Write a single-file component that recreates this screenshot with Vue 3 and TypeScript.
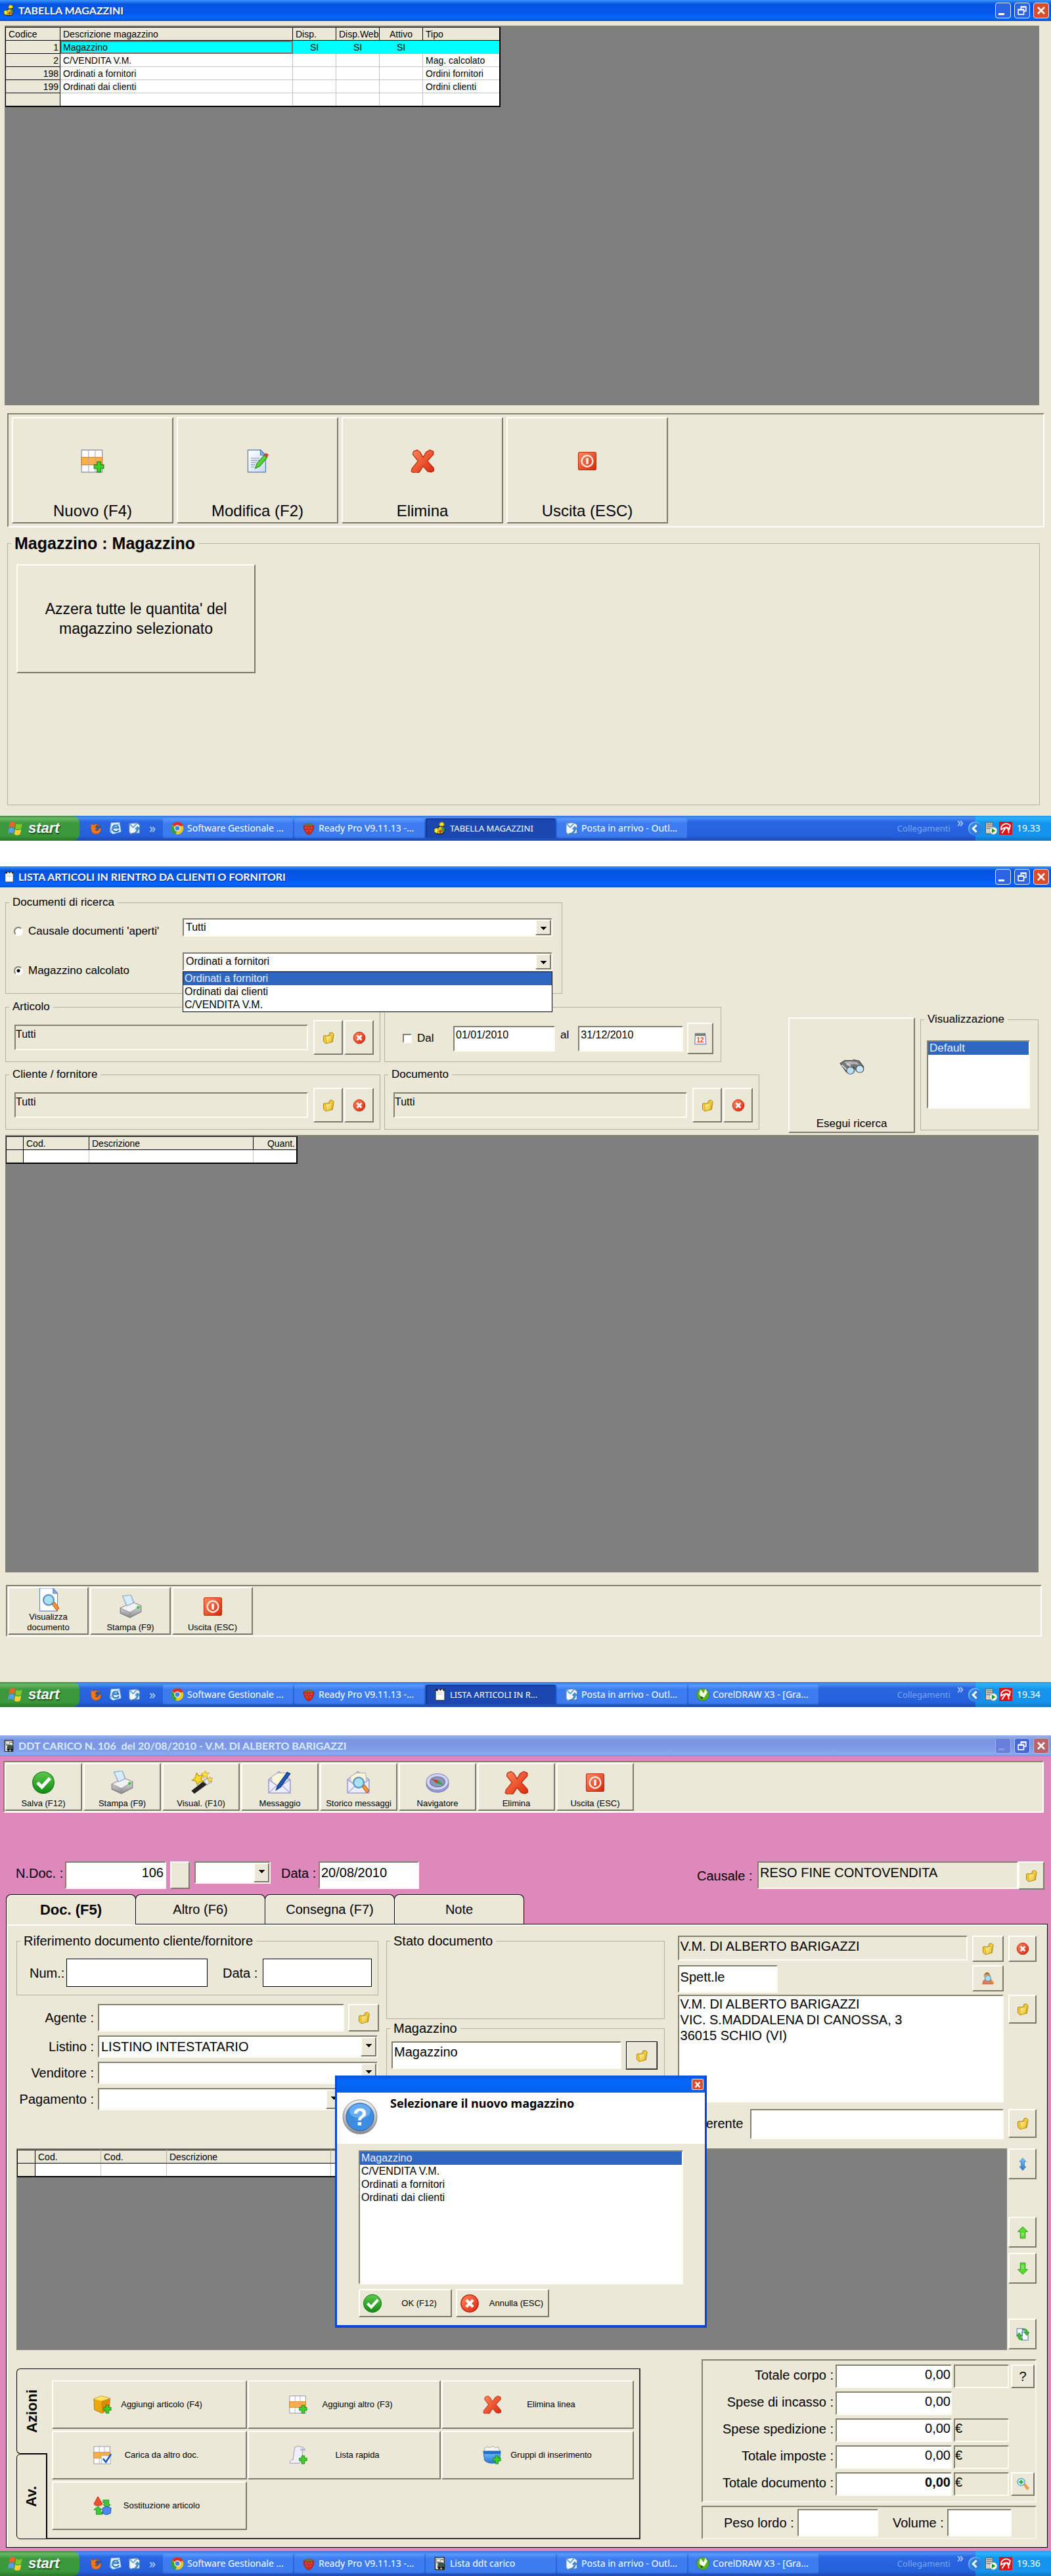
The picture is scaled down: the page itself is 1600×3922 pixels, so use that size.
<script setup lang="ts">
import { ref } from 'vue'

type ScreenKind = 'warehouses' | 'returns' | 'document'

interface Task {
  icon: string
  label: string
}

interface Screen {
  kind: ScreenKind
  icon: string
  title: string
  activeTask: number
  tasks: Task[]
  time: string
}

interface Action {
  icon: string
  label: string
}

interface Total {
  id: string
  label: string
  currency: string | null
  button: string | null
}

const chrome: Task = { icon: 'chrome', label: 'Software Gestionale ...' }
const ready: Task = { icon: 'berry', label: 'Ready Pro V9.11.13 -...' }
const mail: Task = { icon: 'outlook', label: 'Posta in arrivo - Outl...' }
const corel: Task = { icon: 'corel', label: 'CorelDRAW X3 - [Gra...' }

const screens: Screen[] = [
  {
    kind: 'warehouses',
    icon: 'worker',
    title: 'TABELLA MAGAZZINI',
    activeTask: 2,
    tasks: [chrome, ready, { icon: 'worker', label: 'TABELLA MAGAZZINI' }, mail],
    time: '19.33',
  },
  {
    kind: 'returns',
    icon: 'sheet',
    title: 'LISTA ARTICOLI IN RIENTRO DA CLIENTI O FORNITORI',
    activeTask: 2,
    tasks: [chrome, ready, { icon: 'sheet', label: 'LISTA ARTICOLI IN R...' }, mail, corel],
    time: '19.34',
  },
  {
    kind: 'document',
    icon: 'ddt',
    title: 'DDT CARICO N. 106  del 20/08/2010 - V.M. DI ALBERTO BARIGAZZI',
    activeTask: -1,
    tasks: [chrome, ready, { icon: 'ddt', label: 'Lista ddt carico' }, mail, corel],
    time: '19.36',
  },
]

const warehouses = [
  { code: '1', name: 'Magazzino', flag: 'SI', kind: '' },
  { code: '2', name: 'C/VENDITA V.M.', flag: '', kind: 'Mag. calcolato' },
  { code: '198', name: 'Ordinati a fornitori', flag: '', kind: 'Ordini fornitori' },
  { code: '199', name: 'Ordinati dai clienti', flag: '', kind: 'Ordini clienti' },
  { code: '', name: '', flag: '', kind: '' },
]

const warehouseActions: Action[] = [
  { icon: 'row-add', label: 'Nuovo (F4)' },
  { icon: 'edit', label: 'Modifica (F2)' },
  { icon: 'cross', label: 'Elimina' },
  { icon: 'power', label: 'Uscita (ESC)' },
]

const returnActions: Action[] = [
  { icon: 'preview', label: 'Visualizza documento' },
  { icon: 'printer', label: 'Stampa (F9)' },
  { icon: 'power', label: 'Uscita (ESC)' },
]

const documentActions: Action[] = [
  { icon: 'check', label: 'Salva (F12)' },
  { icon: 'printer', label: 'Stampa (F9)' },
  { icon: 'wand', label: 'Visual. (F10)' },
  { icon: 'mail-pen', label: 'Messaggio' },
  { icon: 'mail-lens', label: 'Storico messaggi' },
  { icon: 'compass', label: 'Navigatore' },
  { icon: 'cross', label: 'Elimina' },
  { icon: 'power', label: 'Uscita (ESC)' },
]

const lineActions: Action[] = [
  { icon: 'cube-add', label: 'Aggiungi articolo (F4)' },
  { icon: 'row-add', label: 'Aggiungi altro (F3)' },
  { icon: 'cross', label: 'Elimina linea' },
  { icon: 'row-check', label: 'Carica da altro doc.' },
  { icon: 'scroll-add', label: 'Lista rapida' },
  { icon: 'group-add', label: 'Gruppi di inserimento' },
  { icon: 'swap', label: 'Sostituzione articolo' },
]

const totals: Total[] = [
  { id: 'body', label: 'Totale corpo :', currency: '', button: 'question' },
  { id: 'cash', label: 'Spese di incasso :', currency: null, button: null },
  { id: 'ship', label: 'Spese spedizione :', currency: '€', button: null },
  { id: 'tax', label: 'Totale imposte :', currency: '€', button: null },
  { id: 'doc', label: 'Totale documento :', currency: '€', button: 'zoom' },
]

const tabs = ['Doc. (F5)', 'Altro (F6)', 'Consegna (F7)', 'Note']
const calculated = ['Ordinati a fornitori', 'Ordinati dai clienti', 'C/VENDITA V.M.']
const choices = ['Magazzino', 'C/VENDITA V.M.', 'Ordinati a fornitori', 'Ordinati dai clienti']
const sorters = ['arrow-both', 'arrow-up', 'arrow-down', 'refresh']

const mode = ref('calculated')
const address = ref('V.M. DI ALBERTO BARIGAZZI\nVIC. S.MADDALENA DI CANOSSA, 3\n36015 SCHIO (VI)')
</script>

<template>
  <svg class="sprite" aria-hidden="true">
    <defs>
      <linearGradient id="g-red" x1="0" y1="0" x2="1" y2="1"><stop offset="0" stop-color="#ff8a5c" /><stop offset="1" stop-color="#d8240c" /></linearGradient>
      <linearGradient id="g-gold" x1="0" y1="0" x2="1" y2="1"><stop offset="0" stop-color="#fff6a0" /><stop offset="1" stop-color="#e8b820" /></linearGradient>
      <linearGradient id="g-green" x1="0" y1="0" x2="0" y2="1"><stop offset="0" stop-color="#5cc84c" /><stop offset="1" stop-color="#118a14" /></linearGradient>
      <linearGradient id="g-blue" x1="0" y1="0" x2="0" y2="1"><stop offset="0" stop-color="#7cc4ff" /><stop offset="1" stop-color="#2477d4" /></linearGradient>
      <linearGradient id="g-page" x1="0" y1="0" x2="1" y2="1"><stop offset="0" stop-color="#ffffff" /><stop offset="1" stop-color="#c8d8f0" /></linearGradient>
      <linearGradient id="g-steel" x1="0" y1="0" x2="0" y2="1"><stop offset="0" stop-color="#f4f4f4" /><stop offset="1" stop-color="#8c8c90" /></linearGradient>
    </defs>
    <symbol id="plus" viewBox="0 0 32 32"><path d="M22 17h5v4h4v5h-4v5h-5v-5h-4v-5h4z" fill="#3fd02c" stroke="#128412" /></symbol>
    <symbol id="table" viewBox="0 0 32 32">
      <path d="M1 1h28v30H1z" fill="#fff" stroke="#8888a4" /><path d="M1 11h28v10H1z" fill="#ffb040" stroke="#c88430" /><path d="M10.500 1v30M19.500 1v30" stroke="#a8a8bc" fill="none" />
    </symbol>
    <symbol id="row-add" viewBox="0 0 32 32"><use href="#table" /><use href="#plus" /></symbol>
    <symbol id="row-check" viewBox="0 0 32 32"><use href="#table" /><path d="M14 17h16v14H14z" fill="#fff" stroke="#98a4c0" /><path d="M17 22l5 6 9-14" fill="none" stroke="#185cc4" stroke-width="3" /></symbol>
    <symbol id="edit" viewBox="0 0 32 32">
      <path d="M3 1h17l7 7v23H3z" fill="url(#g-page)" stroke="#5478b0" /><path d="M20 1v7h7z" fill="#8cb4e8" stroke="#5478b0" /><path d="M7 12h12M7 15h13M7 18h8M7 21h6M7 24h5" stroke="#8c9cc0" />
      <path d="M13 26l2-6 10-12 4 3-10 12z" fill="#58d82c" stroke="#1c8c10" /><path d="M25 8l2-3 4 2-2 4z" fill="#e83820" />
    </symbol>
    <symbol id="cross" viewBox="0 0 32 32"><path d="M4 3l5-2 4 3 4 7 4-7 5-3 5 2 0 4-8 9 8 9 1 4-4 2-5-1-6-7-5 8-6 2-5-3 1-4 8-10-7-9z" fill="url(#g-red)" stroke="#b82008" /></symbol>
    <symbol id="power" viewBox="0 0 32 32"><rect x="4" y="4" width="24" height="24" rx="2" fill="url(#g-red)" stroke="#b83014" /><circle cx="16" cy="16" r="7.500" fill="none" stroke="#ffe8e0" stroke-width="2.200" /><path d="M16 12v8" stroke="#fff" stroke-width="3" /></symbol>
    <symbol id="folder" viewBox="0 0 32 32"><path d="M4 12l5-2 2 2 7-3 1-5 6-1 4 4-3 19-17 4-5-5z" fill="#f4cc30" stroke="#a47c10" stroke-width="1.500" /><path d="M9 13l13-3 3 4-1 12-13 4z" fill="url(#g-gold)" stroke="#b88c18" /></symbol>
    <symbol id="stop" viewBox="0 0 32 32"><circle cx="16" cy="16" r="14" fill="url(#g-red)" stroke="#c01808" stroke-width="1.500" /><path d="M10.500 10.500l11 11M21.500 10.500l-11 11" stroke="#fff" stroke-width="4.500" /></symbol>
    <symbol id="check" viewBox="0 0 32 32"><circle cx="16" cy="16" r="14.500" fill="url(#g-green)" stroke="#0c7810" /><path d="M8 16l6 6 11-12" fill="none" stroke="#fff" stroke-width="4.500" /></symbol>
    <symbol id="printer" viewBox="0 0 32 32">
      <path d="M5 2l11-2 5 12-10 4z" fill="#d8ecfc" stroke="#8cacc8" /><path d="M2 18l17-8 11 5v8l-15 8-13-6z" fill="url(#g-steel)" stroke="#78787c" /><path d="M2 18l13 6 15-9-11-5z" fill="#f2f2f4" stroke="#a0a0a4" /><path d="M5 2l11-2 4 11-9 4z" fill="#d8ecfc" stroke="#8cacc8" /><path d="M15 24v7" stroke="#909094" /><circle cx="26" cy="17" r="2" fill="#38c838" />
    </symbol>
    <symbol id="wand" viewBox="0 0 32 32"><path d="M3 27L22 12l4 5L7 31z" fill="#222" /><path d="M19 14l5-4 6 5-6 4z" fill="#e8e8ec" stroke="#909098" /><path d="M10 3l3 4 5-1-2 5 3 4-5 0-3 4-2-5-5-1 4-3z" fill="#ffd828" stroke="#b88c10" /><path d="M22 0l1 3 4 0-3 3 1 3-3-1-3 2 0-4-3-2 4-1zM28 8l1 2 3 0-2 2 1 3-3-1-2 1 0-3-2-1 3-1z" fill="#ffe040" stroke="#b88c10" stroke-width=".6" /></symbol>
    <symbol id="envelope" viewBox="0 0 32 32"><path d="M1 12L15 1l15 11v18H1z" fill="#dcdcf8" stroke="#8c8cc8" /><path d="M5 8l8-5h12l2 12-12 8-10-8z" fill="#fbf6d8" stroke="#b4b4cc" /><path d="M1 12l14 10 15-10v18H1z" fill="#ececff" stroke="#9494cc" /><path d="M1 30l11-10M30 30L19 20" stroke="#a8a8d8" /></symbol>
    <symbol id="mail-pen" viewBox="0 0 32 32"><use href="#envelope" /><path d="M11 26l2-6L26 2l4 2-13 18z" fill="#1c58b4" stroke="#0c3478" /></symbol>
    <symbol id="lens" viewBox="0 0 32 32"><path d="M21 22l3-3 6 8-3 3z" fill="#f89838" stroke="#c05c10" /><circle cx="16" cy="16" r="7" fill="#a8e0f4" stroke="#5c94bc" stroke-width="2" /></symbol>
    <symbol id="mail-lens" viewBox="0 0 32 32"><use href="#envelope" /><use href="#lens" /></symbol>
    <symbol id="preview" viewBox="0 0 32 32"><path d="M4 0h18l6 7v24H4z" fill="#fff" stroke="#6888c0" /><path d="M22 0v7h6z" fill="#88a8e0" stroke="#6888c0" /><use href="#lens" /></symbol>
    <symbol id="compass" viewBox="0 0 32 32"><ellipse cx="16" cy="18" rx="15" ry="11" fill="#a0a0d8" stroke="#7878b8" /><ellipse cx="16" cy="15" rx="15" ry="11" fill="#d4d4f4" stroke="#8484c0" /><ellipse cx="16" cy="15" rx="10" ry="7" fill="#8898b8" stroke="#6c6ca4" /><path d="M8 11l9 2-2 4z" fill="#e03020" /><path d="M24 19l-9-2 2-4z" fill="#30a030" /></symbol>
    <symbol id="binoculars" viewBox="0 0 32 32" preserveAspectRatio="none"><path d="M1 9l6-6 9 0 3-1 6 2 6 12-5 8-5-2-3-6-4 10-5 0z" fill="#77787c" stroke="#333" /><path d="M6 6l8-1 9 2 2 5-7-2-8 3z" fill="#b4b4b8" /><ellipse cx="14" cy="23" rx="5" ry="7" fill="#b8dcfc" stroke="#444" /><ellipse cx="26" cy="20" rx="5" ry="7" fill="#c4e4ff" stroke="#444" /><path d="M3 12l6 9M10 9l4 6" stroke="#d8d8dc" stroke-width="2" /></symbol>
    <symbol id="person-lens" viewBox="0 0 32 32"><path d="M3 30c0-9 4-12 12-12s12 4 13 12z" fill="#e8785c" stroke="#b04828" /><circle cx="14" cy="10" r="7" fill="#f4b868" stroke="#b07830" /><path d="M7 10c0-11 14-11 14 0l-3-4-8 1z" fill="#a86830" /><use href="#lens" /></symbol>
    <symbol id="arrow-both" viewBox="0 0 32 32"><path d="M16 1l8 9h-4v12h4l-8 9-8-9h4V10H8z" fill="url(#g-blue)" stroke="#1c68b8" /></symbol>
    <symbol id="arrow-up" viewBox="0 0 32 32"><path d="M16 2l12 12h-6v16H10V14H4z" fill="#58dc30" stroke="#1c9410" stroke-width="1.500" /><path d="M13 18h6M13 22h6" stroke="#b4f498" stroke-width="2" /></symbol>
    <symbol id="arrow-down" viewBox="0 0 32 32"><path d="M16 30L4 18h6V2h12v16h6z" fill="#58dc30" stroke="#1c9410" stroke-width="1.500" /><path d="M13 10h6M13 14h6" stroke="#b4f498" stroke-width="2" /></symbol>
    <symbol id="refresh" viewBox="0 0 32 32"><path d="M2 2h13v18H2zM14 11h15v19H14z" fill="#fff" stroke="#6c8cc8" stroke-width="2" /><path d="M16 2c9 0 12 4 12 9h4l-6 8-7-8h4c0-3-2-5-7-5z" fill="#3cbc34" stroke="#148418" /><path d="M15 30C7 30 4 26 4 20H1l6-8 7 8h-4c0 4 2 6 5 6z" fill="#3cbc34" stroke="#148418" /></symbol>
    <symbol id="cube-add" viewBox="0 0 32 32"><path d="M1 6L14 1l15 4-1 19-13 7L2 25z" fill="#eca808" stroke="#a87000" /><path d="M1 6l13 4 15-5L14 1z" fill="#ffe468" /><path d="M14 10l1 21 13-7 1-19z" fill="#d88c04" /><use href="#plus" /></symbol>
    <symbol id="scroll-add" viewBox="0 0 32 32"><path d="M10 2c6-3 18 0 18 5l-5 1 1 16-6 6H2c-2-4 2-6 5-6z" fill="#f0f0fa" stroke="#9090b0" /><path d="M19 8c0-5 9-5 9-1l-5 1z" fill="#b8b8d0" /><use href="#plus" /></symbol>
    <symbol id="group-add" viewBox="0 0 32 32"><path d="M3 4l5-3 4 2 5-3 4 3 6-1 3 8H2z" fill="#f4f4f0" stroke="#a0a098" /><path d="M1 9h30l-2 16c-4 6-20 7-26 0z" fill="url(#g-blue)" stroke="#185ca8" /><path d="M1 9h30l-1 5H2z" fill="#1c70c8" /><use href="#plus" /></symbol>
    <symbol id="swap" viewBox="0 0 32 32"><path d="M8 0l8 13c-3 4-12 4-15 0z" fill="#f05030" stroke="#b02810" /><path d="M17 6h10v8h3l-6 7-7-7h3v-3h-3zM8 17l7 6h-3v4h4v4H5v-8H1z" fill="#40c838" stroke="#188c18" /><path d="M16 20l7-3 8 3-1 9-7 3-7-3z" fill="#4c88f0" stroke="#1c4cb0" /></symbol>
    <symbol id="zoom" viewBox="0 0 32 32"><path d="M18 18l4-3 9 11-4 4z" fill="#f8a040" stroke="#c86c18" /><circle cx="12" cy="11" r="9" fill="#bceaf8" stroke="#5ca0b8" stroke-width="2" /><path d="M12 6v10M7 11h10" stroke="#20a020" stroke-width="3" /></symbol>
    <symbol id="worker" viewBox="0 0 32 32"><circle cx="20" cy="7" r="6" fill="#f4e020" stroke="#5c5400" /><path d="M14 12l10-1 4 10-6 8-10 1-8-3 2-9z" fill="#d8c818" stroke="#181800" stroke-width="2" /><path d="M18 11l8 3 2 9-6 2z" fill="#448c60" /><path d="M2 17l7-2 3 6-4 8-6-4z" fill="#f8ec40" stroke="#4c4400" /><path d="M16 19l6 3-5 7-4-4z" fill="#d83818" /></symbol>
    <symbol id="sheet" viewBox="0 0 32 32"><path d="M5 3h22v27H5z" fill="#fff" stroke="#38382c" stroke-width="1.500" /><path d="M5 2h6v5H5zM15 1h4v5h-4zM23 2h4v5h-4z" fill="#222" /><path d="M9 11h13M9 15h13" stroke="#b0b0a8" /></symbol>
    <symbol id="ddt" viewBox="0 0 32 32"><path d="M4 1h22v30H4z" fill="#e8e8dc" stroke="#222" stroke-width="2" /><path d="M7 5h10v6H7z" fill="#fff" stroke="#444" /><path d="M12 14h10l5 5v7H10z" fill="#38584c" stroke="#111" /><circle cx="14" cy="27" r="3" fill="#111" /><circle cx="23" cy="27" r="3" fill="#111" /><path d="M7 14h4M19 6h5" stroke="#484840" stroke-width="2" /></symbol>
    <symbol id="firefox" viewBox="0 0 32 32"><circle cx="17" cy="16" r="12" fill="#2c58a8" /><path d="M3 4l5 4c5-4 14-3 18 2l-9-2-4 6 5 3-5 3c3 5 10 2 11-5l4 1C29 26 22 31 15 31 4 31 1 21 3 4z" fill="#f07818" stroke="#a84408" /></symbol>
    <symbol id="ie" viewBox="0 0 32 32"><path d="M5 2l22-1 4 24-21 6-8-6z" fill="#e0eefc" stroke="#6ca0d8" /><path d="M25 20c-3 7-15 7-16-3S23 5 24 15H10" fill="none" stroke="#2070c8" stroke-width="3.500" /><path d="M3 26C6 18 16 6 28 5" fill="none" stroke="#50a4e0" stroke-width="2" /></symbol>
    <symbol id="outlook" viewBox="0 0 32 32"><path d="M3 4l20-2 7 6-1 20-22 3-4-5z" fill="#f4f8fc" stroke="#5c84b4" stroke-width="2" /><path d="M4 5l9 9L23 3" fill="none" stroke="#58a0dc" stroke-width="3" /><path d="M9 29c8 0 13-5 13-11h-4l6-7 6 7h-4c0 8-7 14-17 11z" fill="#3c94dc" stroke="#1c60a0" /></symbol>
    <symbol id="chrome" viewBox="0 0 32 32"><circle cx="16" cy="16" r="15" fill="#e8c820" /><path d="M16 16L3 8C10-3 27-1 30 10l-14 1z" fill="#e02c1c" /><path d="M16 16l-4 15C2 29-2 17 3 8l8 9z" fill="#30a03c" /><circle cx="16" cy="16" r="7.500" fill="#fff" /><circle cx="16" cy="16" r="5.500" fill="#4484e0" /></symbol>
    <symbol id="berry" viewBox="0 0 32 32"><path d="M3 11c4-7 22-7 26 0 0 8-7 21-13 21S3 19 3 11z" fill="#cc2c20" stroke="#8c1810" /><path d="M6 5l7 2 2-6 4 6 8-2-5 6-6-2-6 2z" fill="#5c8428" /><path d="M9 14v2M16 15v2M23 14v2M12 21v2M20 21v2" stroke="#f0a080" stroke-width="2" /></symbol>
    <symbol id="corel" viewBox="0 0 32 32"><circle cx="16" cy="16" r="15" fill="#58b41c" stroke="#307808" /><path d="M10 3l8 10 4-11 5 8-7 12-9 6 0-6-4-8z" fill="#f4fce8" /><path d="M12 28l-3-9 9 4z" fill="#1c5c08" /></symbol>
    <symbol id="server" viewBox="0 0 32 32"><path d="M4 2h17v27H4z" fill="#d4d4cc" stroke="#55554c" stroke-width="1.500" /><path d="M6 6h13M6 11h13M6 16h13" stroke="#6c6c64" stroke-width="2" /><circle cx="23" cy="22" r="9" fill="#fff" stroke="#888" /><path d="M19 16l9 6-9 6z" fill="#189818" /></symbol>
    <symbol id="umbrella" viewBox="0 0 32 32"><path d="M0 0h32v32H0z" fill="#dc1418" /><path d="M5 19C3 8 17 0 27 9l-2 9c-4-4-11-5-20 1z" fill="none" stroke="#fff" stroke-width="3" /><path d="M17 13L7 28M17 13c5 3 7 9 6 15" fill="none" stroke="#fff" stroke-width="3" /></symbol>
    <symbol id="flag" viewBox="0 0 32 32"><path d="M4 5c4-3 7-3 11 0l-2 10c-4-3-7-3-11 0z" fill="#f06028" /><path d="M17 6c4 3 8 2 12 0l-2 10c-4 3-8 3-12 0z" fill="#80c828" /><path d="M2 17c4-3 7-3 11 0l-2 10c-4-3-7-3-11 0z" fill="#5c9cf8" /><path d="M15 18c4 3 8 2 12 0l-2 10c-4 3-8 3-12 0z" fill="#fcd030" /></symbol>
  </svg>

  <main class="page">
    <section v-for="screen in screens" :key="screen.kind" class="screen" :class="screen.kind">
      <header class="titlebar">
        <svg class="ico title-ico"><use :href="'#' + screen.icon" /></svg>
        <h1>{{ screen.title }}</h1>
        <button type="button" class="win min" aria-label="Riduci"><i></i></button>
        <button type="button" class="win max" aria-label="Ripristina"><svg viewBox="0 0 24 24"><path d="M10 9V5h9v8h-4M10 6h9M5 10h10v9H5zM5 11h10" fill="none" stroke="#fff" stroke-width="2" /></svg></button>
        <button type="button" class="win close" aria-label="Chiudi"><svg viewBox="0 0 24 24"><path d="M6 6l12 12M18 6L6 18" stroke="#fff" stroke-width="3" /></svg></button>
      </header>

      <!-- Tabella magazzini -->
      <div v-if="screen.kind === 'warehouses'" class="body">
        <div class="viewport">
          <table class="grid stock">
            <thead>
              <tr><th>Codice</th><th>Descrizione magazzino</th><th>Disp.</th><th>Disp.Web</th><th class="mid">Attivo</th><th>Tipo</th></tr>
            </thead>
            <tbody>
              <tr v-for="(row, i) in warehouses" :key="i" :class="{ current: i === 0 }">
                <th class="num">{{ row.code }}</th><td>{{ row.name }}</td><td class="mid">{{ row.flag }}</td><td class="mid">{{ row.flag }}</td><td class="mid">{{ row.flag }}</td><td>{{ row.kind }}</td>
              </tr>
            </tbody>
          </table>
        </div>
        <nav class="bar big-bar">
          <button v-for="a in warehouseActions" :key="a.label" type="button" class="raised big">
            <svg class="ico"><use :href="'#' + a.icon" /></svg><span>{{ a.label }}</span>
          </button>
        </nav>
        <fieldset class="selected-box">
          <legend>Magazzino : Magazzino</legend>
          <button type="button" class="raised reset">Azzera tutte le quantita' del magazzino selezionato</button>
        </fieldset>
      </div>

      <!-- Lista articoli in rientro -->
      <div v-else-if="screen.kind === 'returns'" class="body">
        <div class="filters">
          <div class="filter-left">
            <fieldset class="search-docs">
              <legend>Documenti di ricerca</legend>
              <div class="doc-cols">
                <div class="radios">
                  <label><input v-model="mode" type="radio" name="mode" value="open" />Causale documenti 'aperti'</label>
                  <label><input v-model="mode" type="radio" name="mode" value="calculated" />Magazzino calcolato</label>
                </div>
                <div class="combos">
                  <span class="combo"><select aria-label="Causale documenti aperti"><option>Tutti</option></select></span>
                  <div class="open-combo">
                    <span class="combo"><select aria-label="Magazzino calcolato"><option v-for="c in calculated" :key="c">{{ c }}</option></select></span>
                    <ul class="menu" role="listbox"><li v-for="(c, i) in calculated" :key="c" role="option" :class="{ on: i === 0 }">{{ c }}</li></ul>
                  </div>
                </div>
              </div>
            </fieldset>
            <div class="filter-row">
              <fieldset class="pick">
                <legend>Articolo</legend>
                <div class="pick-in">
                  <input class="sunken locked" type="text" value="Tutti" readonly aria-label="Articolo" />
                  <button type="button" class="raised" aria-label="Scegli articolo"><svg class="ico"><use href="#folder" /></svg></button>
                  <button type="button" class="raised" aria-label="Azzera articolo"><svg class="ico"><use href="#stop" /></svg></button>
                </div>
              </fieldset>
              <fieldset class="dates" aria-label="Intervallo date">
                <label class="from"><input type="checkbox" />Dal</label>
                <input class="sunken" type="text" value="01/01/2010" aria-label="Dal" />
                <label for="date-to">al</label>
                <input id="date-to" class="sunken" type="text" value="31/12/2010" />
                <button type="button" class="raised" aria-label="Calendario">
                  <svg class="ico" viewBox="0 0 32 32"><path d="M4 4h24l2 26H3z" fill="#fff" stroke="#8080c0" stroke-width="2" /><path d="M4 3h24v7H4z" fill="#74747c" /><path d="M8 1v5M13 1v5M18 1v5M23 1v5" stroke="#d8d8d8" /><text x="16" y="25" text-anchor="middle" font-family="Liberation Sans, sans-serif" font-weight="bold" font-size="16" fill="#f04818">12</text></svg>
                </button>
              </fieldset>
            </div>
            <div class="filter-row second">
              <fieldset v-for="name in ['Cliente / fornitore', 'Documento']" :key="name" class="pick">
                <legend>{{ name }}</legend>
                <div class="pick-in">
                  <input class="sunken locked" type="text" value="Tutti" readonly :aria-label="name" />
                  <button type="button" class="raised" :aria-label="'Scegli ' + name"><svg class="ico"><use href="#folder" /></svg></button>
                  <button type="button" class="raised" :aria-label="'Azzera ' + name"><svg class="ico"><use href="#stop" /></svg></button>
                </div>
              </fieldset>
            </div>
          </div>
          <div class="filter-right">
            <button type="button" class="raised run"><svg class="ico"><use href="#binoculars" /></svg><span>Esegui ricerca</span></button>
            <fieldset class="views">
              <legend>Visualizzazione</legend>
              <ul class="sunken list" role="listbox"><li class="on" role="option">Default</li></ul>
            </fieldset>
          </div>
        </div>
        <div class="viewport">
          <table class="grid found">
            <thead><tr><th></th><th>Cod.</th><th>Descrizione</th><th class="num">Quant.</th></tr></thead>
            <tbody><tr><th></th><td></td><td></td><td></td></tr></tbody>
          </table>
        </div>
        <nav class="bar small-bar">
          <button v-for="a in returnActions" :key="a.label" type="button" class="raised tool">
            <svg class="ico"><use :href="'#' + a.icon" /></svg><span>{{ a.label }}</span>
          </button>
        </nav>
      </div>

      <!-- DDT carico -->
      <div v-else class="body">
        <nav class="bar small-bar">
          <button v-for="a in documentActions" :key="a.label" type="button" class="raised tool">
            <svg class="ico"><use :href="'#' + a.icon" /></svg><span>{{ a.label }}</span>
          </button>
        </nav>
        <div class="doc-head">
          <label for="doc-no">N.Doc. :</label>
          <input id="doc-no" class="sunken no" type="text" value="106" />
          <button type="button" class="raised blank" aria-label="Numero successivo"></button>
          <span class="combo suffix"><select aria-label="Suffisso"><option></option></select></span>
          <label for="doc-date" class="date-label">Data :</label>
          <input id="doc-date" class="sunken date" type="text" value="20/08/2010" />
          <label for="reason" class="reason-label">Causale :</label>
          <input id="reason" class="sunken locked reason" type="text" value="RESO FINE CONTOVENDITA" readonly />
          <button type="button" class="raised pick-reason" aria-label="Scegli causale"><svg class="ico"><use href="#folder" /></svg></button>
        </div>
        <div class="tabs" role="tablist">
          <button v-for="(t, i) in tabs" :key="t" type="button" role="tab" :class="{ on: i === 0 }">{{ t }}</button>
        </div>
        <div class="sheet">
          <div class="form">
            <div class="col-a">
              <fieldset class="ref-doc">
                <legend>Riferimento documento cliente/fornitore</legend>
                <div class="ref-in">
                  <label for="ref-no">Num.:</label><input id="ref-no" class="flat" type="text" />
                  <label for="ref-date">Data :</label><input id="ref-date" class="flat short" type="text" />
                </div>
              </fieldset>
              <div class="line">
                <label for="agent">Agente :</label><input id="agent" class="sunken" type="text" />
                <button type="button" class="raised" aria-label="Scegli agente"><svg class="ico"><use href="#folder" /></svg></button>
              </div>
              <div class="line"><label for="price">Listino :</label><span class="combo"><select id="price"><option>LISTINO INTESTATARIO</option></select></span></div>
              <div class="line"><label for="seller">Venditore :</label><span class="combo"><select id="seller"><option></option></select></span></div>
              <div class="line"><label for="pay">Pagamento :</label><span class="combo pay"><select id="pay"><option></option></select></span></div>
            </div>
            <div class="col-b">
              <fieldset class="state"><legend>Stato documento</legend></fieldset>
              <fieldset class="store">
                <legend>Magazzino</legend>
                <div class="store-in">
                  <input class="sunken" type="text" value="Magazzino" aria-label="Magazzino" />
                  <button type="button" class="raised default" aria-label="Scegli magazzino"><svg class="ico"><use href="#folder" /></svg></button>
                </div>
              </fieldset>
            </div>
            <div class="col-c">
              <div class="party">
                <input class="sunken locked" type="text" value="V.M. DI ALBERTO BARIGAZZI" readonly aria-label="Intestatario" />
                <button type="button" class="raised" aria-label="Scegli intestatario"><svg class="ico"><use href="#folder" /></svg></button>
                <button type="button" class="raised edge" aria-label="Azzera intestatario"><svg class="ico"><use href="#stop" /></svg></button>
              </div>
              <div class="party greet">
                <input class="sunken" type="text" value="Spett.le" aria-label="Titolo" />
                <button type="button" class="raised" aria-label="Scheda cliente"><svg class="ico"><use href="#person-lens" /></svg></button>
              </div>
              <div class="party addr">
                <textarea v-model="address" class="sunken" aria-label="Indirizzo"></textarea>
                <button type="button" class="raised edge" aria-label="Scegli indirizzo"><svg class="ico"><use href="#folder" /></svg></button>
              </div>
              <div class="party contact">
                <label for="contact">Referente</label>
                <input id="contact" class="sunken" type="text" />
                <button type="button" class="raised edge" aria-label="Scegli referente"><svg class="ico"><use href="#folder" /></svg></button>
              </div>
            </div>
          </div>
          <div class="lines">
            <div class="viewport">
              <table class="grid rows">
                <thead><tr><th></th><th>Cod.</th><th>Cod.</th><th>Descrizione</th><th></th></tr></thead>
                <tbody><tr><th></th><td></td><td></td><td></td><td></td></tr></tbody>
              </table>
            </div>
            <div class="sorters">
              <button v-for="s in sorters" :key="s" type="button" class="raised" :class="s" :aria-label="s"><svg class="ico"><use :href="'#' + s" /></svg></button>
            </div>
          </div>
          <div class="foot">
            <div class="actions">
              <div class="side-tabs" role="tablist">
                <button type="button" role="tab" class="on"><span>Azioni</span></button>
                <button type="button" role="tab"><span>Av.</span></button>
              </div>
              <div class="action-grid">
                <button v-for="a in lineActions" :key="a.label" type="button" class="raised">
                  <svg class="ico"><use :href="'#' + a.icon" /></svg><span>{{ a.label }}</span>
                </button>
              </div>
            </div>
            <div class="sums">
              <div class="totals">
                <div v-for="t in totals" :key="t.id" class="total">
                  <label :for="'total-' + t.id">{{ t.label }}</label>
                  <input :id="'total-' + t.id" class="sunken" :class="{ strong: t.id === 'doc' }" type="text" value="0,00" />
                  <input v-if="t.currency !== null" class="sunken locked cur" type="text" :value="t.currency" readonly :aria-label="'Valuta ' + t.label" />
                  <button v-if="t.button === 'question'" type="button" class="raised">?</button>
                  <button v-if="t.button === 'zoom'" type="button" class="raised" aria-label="Dettaglio"><svg class="ico"><use href="#zoom" /></svg></button>
                </div>
              </div>
              <div class="weights">
                <label for="weight">Peso lordo :</label><input id="weight" class="sunken" type="text" />
                <label for="volume">Volume :</label><input id="volume" class="sunken vol" type="text" />
              </div>
            </div>
          </div>
        </div>

        <div class="dialog" role="dialog" aria-labelledby="dialog-title">
          <div class="dialog-bar"><button type="button" class="win close" aria-label="Chiudi"><svg viewBox="0 0 24 24"><path d="M6 5l12 14M18 5L6 19" stroke="#fff" stroke-width="4" /></svg></button></div>
          <div class="dialog-head">
            <svg class="ico" viewBox="0 0 54 54"><circle cx="27" cy="27" r="26" fill="url(#g-steel)" stroke="#88888c" /><circle cx="27" cy="27" r="21" fill="#3c8ce0" stroke="#2464b0" /><ellipse cx="27" cy="18" rx="16" ry="11" fill="#68acf0" /><text x="27" y="40" text-anchor="middle" font-family="Liberation Sans, sans-serif" font-weight="bold" font-size="36" fill="#fff">?</text></svg>
            <h2 id="dialog-title">Selezionare il nuovo magazzino</h2>
          </div>
          <div class="dialog-body">
            <ul class="sunken list" role="listbox"><li v-for="(c, i) in choices" :key="c" role="option" :class="{ on: i === 0 }">{{ c }}</li></ul>
            <div class="dialog-actions">
              <button type="button" class="raised"><svg class="ico"><use href="#check" /></svg><span>OK (F12)</span></button>
              <button type="button" class="raised"><svg class="ico"><use href="#stop" /></svg><span>Annulla (ESC)</span></button>
            </div>
          </div>
        </div>
      </div>

      <footer class="taskbar">
        <button type="button" class="start"><svg class="ico"><use href="#flag" /></svg>start</button>
        <div class="quick">
          <svg class="ico"><use href="#firefox" /></svg><svg class="ico"><use href="#ie" /></svg><svg class="ico"><use href="#outlook" /></svg><span class="more">»</span>
        </div>
        <button v-for="(t, i) in screen.tasks" :key="t.label" type="button" class="task" :class="{ on: i === screen.activeTask }">
          <svg class="ico"><use :href="'#' + t.icon" /></svg><span>{{ t.label }}</span>
        </button>
        <span class="links">Collegamenti</span><span class="more">»</span>
        <div class="tray">
          <button type="button" class="expand" aria-label="Mostra icone"><svg viewBox="0 0 20 20"><path d="M12 5l-5 5 5 5" fill="none" stroke="#fff" stroke-width="3" /></svg></button>
          <svg class="ico"><use href="#server" /></svg><svg class="ico"><use href="#umbrella" /></svg>
          <time>{{ screen.time }}</time>
        </div>
      </footer>
    </section>
  </main>
</template>

<style>
body {
  margin: 0;
  background: #fff;
}
</style>

<style scoped>
* {
  box-sizing: border-box;
}
.sprite {
  position: absolute;
  width: 0;
  height: 0;
}
.page {
  font: 16px/20px "Liberation Sans", Arial, sans-serif;
  color: #000;
}
button, input, select, textarea {
  font: inherit;
  color: inherit;
  margin: 0;
  border-radius: 0;
}
button {
  padding: 0;
}
h1, h2, ul {
  margin: 0;
  padding: 0;
  list-style: none;
}
fieldset {
  margin: 0;
  padding: 0;
  min-width: 0;
  border: 1px solid #b4b1a2;
}
legend {
  margin-left: 5px;
  padding: 0 5px;
}
.ico {
  width: 24px;
  height: 24px;
  flex: none;
}
.screen {
  position: relative;
  background: #ebe8d7;
  margin-bottom: 39px;
}
.screen.returns {
  margin-bottom: 43px;
}
.screen.document {
  background: #df88bc;
  margin-bottom: 0;
}

/* title bar */
.titlebar {
  display: flex;
  align-items: center;
  gap: 5px;
  height: 32px;
  padding: 0 3px 0 5px;
  background: linear-gradient(#3c94fc, #0454e0 20%, #0458ea 60%, #0468fc 85%, #0450d0);
}
.document .titlebar {
  background: linear-gradient(#98b4f0, #7c98e4 20%, #7c98e4 55%, #88aaf0 90%, #7890dc);
}
.title-ico {
  width: 18px;
  height: 22px;
}
.titlebar h1 {
  flex: 1;
  font: bold 16px/20px Lato, "Liberation Sans", sans-serif;
  color: #fff;
  white-space: pre;
  text-shadow: 1px 1px #0c2c80;
}
.document .titlebar h1 {
  color: #dce8fc;
  text-shadow: none;
}
.win {
  display: grid;
  place-items: center;
  width: 24px;
  height: 24px;
  border: 1px solid #e4ecfc;
  border-radius: 4px;
  background: #2c64e4;
}
.win svg {
  width: 20px;
  height: 20px;
}
.win.min i {
  width: 9px;
  height: 3px;
  margin: 10px 6px 0 0;
  background: #fff;
}
.win.close {
  background: #dc4c28;
}
.document .titlebar .min {
  border-color: #9cb0ec;
  background: #6880dc;
}
.document .titlebar .min i {
  background: #8c98e4;
}
.document .titlebar .max {
  border-color: #b4c8f4;
  background: #4468dc;
}
.document .titlebar .close {
  border-color: #ccb8cc;
  background: #b8646c;
}

/* shared edges */
.raised {
  border: 2px solid;
  border-color: #fffffa #7c7a6c #7c7a6c #fffffa;
  background: #ebe8d7;
  display: flex;
  align-items: center;
  justify-content: center;
}
.sunken {
  border: 2px solid;
  border-color: #84826f #fdfcf2 #fdfcf2 #84826f;
  background: #fff;
}
input.sunken {
  padding: 0 2px 6px;
}
.sunken.locked {
  background: #ebe8d7;
}
.bar {
  display: flex;
  border: 2px solid;
  border-color: #84826f #fff #fff #84826f;
  background: #ebe8d7;
}
.viewport {
  border-top: 2px solid #84826f;
  border-left: 1px solid #84826f;
  background: #7f7f7f;
}
.combo {
  position: relative;
  display: flex;
  border: 2px solid;
  border-color: #84826f #fdfcf2 #fdfcf2 #84826f;
  background: #fff;
}
.combo select {
  flex: 1;
  min-width: 0;
  appearance: none;
  border: 0;
  padding: 0 24px 0 3px;
  background: none;
}
.combo::after {
  content: "";
  position: absolute;
  top: 0;
  right: 0;
  bottom: 0;
  width: 20px;
  border: 2px solid;
  border-color: #fffffa #7c7a6c #7c7a6c #fffffa;
  background: linear-gradient(#000, #000) center 9px / 9px 1px no-repeat, linear-gradient(#000, #000) center 10px / 7px 1px no-repeat, linear-gradient(#000, #000) center 11px / 5px 1px no-repeat, linear-gradient(#000, #000) center 12px / 3px 1px no-repeat, linear-gradient(#000, #000) center 13px / 1px 1px no-repeat, #ebe8d7;
  pointer-events: none;
}
.list li, .menu li {
  padding: 0 2px;
}
.on[role="option"] {
  background: #2e66c2;
  color: #e8f0ff;
}

/* data grids */
.grid {
  table-layout: fixed;
  border-collapse: collapse;
  font-size: 14px;
  line-height: 18px;
  background: #fff;
  border-right: 2px solid #000;
  border-bottom: 2px solid #000;
}
.grid th, .grid td {
  height: 20px;
  padding: 0 0 0 4px;
  border: 1px solid #c4c4c4;
  font-weight: normal;
  text-align: left;
  white-space: nowrap;
}
.grid th {
  background: #ebe8d7;
  border-color: #000;
}
.grid .num {
  text-align: right;
  padding: 0 2px 0 0;
}
.grid .mid {
  text-align: center;
  padding: 0;
}
.grid .current td {
  background: #00ffff;
  border-color: #00ffff;
  border-top-color: #000;
}
.grid .current td:nth-child(2) {
  outline: 2px solid #7c6c68;
  outline-offset: -2px;
}
.stock {
  width: 754px;
}
.stock th:nth-child(1) { width: 83px; }
.stock th:nth-child(2) { width: 354px; }
.stock th:nth-child(3), .stock th:nth-child(4), .stock th:nth-child(5) { width: 66px; }
.found {
  width: 444px;
}
.found th:nth-child(1) { width: 26px; }
.found th:nth-child(2) { width: 100px; }
.found th:nth-child(3) { width: 250px; }
.rows {
  width: 640px;
}
.rows th:nth-child(1) { width: 27px; }
.rows th:nth-child(2), .rows th:nth-child(3) { width: 100px; }
.rows th:nth-child(4) { width: 250px; }
.rows thead th + th {
  border-right-color: #b4b1a2;
}

/* warehouses */
.warehouses .body {
  padding: 7px 0 16px;
}
.warehouses .viewport {
  height: 578px;
  margin: 0 18px 0 7px;
}
.big-bar {
  gap: 5px;
  margin: 12px 10px 0 11px;
  padding: 4px 5px;
}
.big {
  width: 246px;
  height: 162px;
  flex-direction: column;
  justify-content: flex-end;
  gap: 44px;
  padding-bottom: 3px;
  font-size: 24px;
  line-height: 28px;
}
.big .ico {
  width: 36px;
  height: 36px;
}
.selected-box {
  min-height: 413px;
  margin: 10px 17px 0 11px;
}
.selected-box legend {
  font-weight: bold;
  font-size: 25px;
  line-height: 28px;
}
.reset {
  width: 364px;
  height: 166px;
  margin: 18px 0 0 13px;
  padding: 0 30px;
  font-size: 23px;
  line-height: 30px;
}

/* returns */
.returns .body {
  padding: 13px 0 69px;
}
.filters {
  display: flex;
  justify-content: space-between;
  align-items: flex-end;
  margin: 0 19px 0 8px;
  font-size: 17px;
}
.filter-left {
  padding-bottom: 5px;
}
.filters input, .filters select, .menu {
  font-size: 16px;
}
.search-docs {
  width: 848px;
  height: 149px;
}
.doc-cols {
  display: flex;
}
.radios {
  display: flex;
  flex-direction: column;
  gap: 40px;
  width: 269px;
  padding: 24px 0 0 12px;
}
.radios label, .from {
  display: flex;
  align-items: center;
  gap: 8px;
}
input[type="radio"], input[type="checkbox"] {
  appearance: none;
  width: 14px;
  height: 14px;
  border: 2px solid;
  border-color: #84826f #fffef4 #fffef4 #84826f;
  background: #fff;
}
input[type="radio"] {
  border-radius: 50%;
}
input[type="radio"]:checked {
  background: radial-gradient(#000 0 2px, #fff 3px);
}
.combos {
  display: flex;
  flex-direction: column;
  gap: 24px;
  width: 563px;
  padding-top: 14px;
}
.combos .combo {
  height: 28px;
}
.open-combo {
  position: relative;
}
.menu {
  position: absolute;
  z-index: 2;
  top: 29px;
  left: 0;
  right: 0;
  border: 1px solid #000;
  background: #fff;
}
.filter-row {
  display: flex;
  gap: 6px;
  margin-top: 10px;
}
.filter-row.second {
  margin-top: 9px;
}
.pick {
  width: 571px;
  height: 94px;
}
.pick-in {
  display: flex;
  align-items: center;
  padding: 10px 9px 0 13px;
  gap: 2px;
}
.pick-in input {
  flex: 1;
  min-width: 0;
  height: 39px;
  margin-right: 6px;
}
.pick-in .sunken {
  padding: 0 0 10px;
}
.pick-in button {
  width: 45px;
  height: 53px;
}
.pick-in .ico {
  width: 20px;
  height: 20px;
}
.dates {
  display: flex;
  align-items: center;
  width: 513px;
  height: 84px;
  margin-top: 10px;
  padding: 12px 10px 0 27px;
}
.from {
  width: 77px;
}
.dates .sunken {
  width: 155px;
  height: 39px;
  padding-bottom: 10px;
}
.dates label + .sunken + label {
  padding: 0 14px 10px 8px;
}
.dates #date-to {
  width: 160px;
}
.dates button {
  width: 40px;
  height: 48px;
  margin-left: 6px;
}
.dates .ico {
  width: 20px;
  height: 20px;
}
.filter-right {
  display: flex;
  gap: 8px;
}
.run {
  width: 193px;
  height: 176px;
  flex-direction: column;
  justify-content: flex-end;
  gap: 64px;
  padding-bottom: 2px;
}
.run .ico {
  width: 38px;
  height: 25px;
}
.views {
  width: 180px;
  height: 179px;
  margin-top: -7px;
}
.views .list {
  height: 104px;
  margin: 22px 12px 0 9px;
  font-size: 17px;
}
.returns .viewport {
  height: 666px;
  margin: 3px 19px 0 8px;
}
.small-bar {
  gap: 2px;
  padding: 1px;
}
.returns .small-bar {
  margin: 19px 14px 0 9px;
}
.tool {
  width: 123px;
  height: 73px;
  flex-direction: column;
  justify-content: flex-end;
  gap: 4px;
  padding: 0 4px 1px;
  font-size: 13px;
  line-height: 16px;
}
.tool:not(:first-child) .ico, .document .tool .ico {
  margin-bottom: 2px;
}
.returns .tool:first-child {
  gap: 0;
  padding: 0 20px 1px;
}
.raised.tool > .ico {
  width: 36px;
  height: 36px;
}

/* document */
.document .body {
  padding: 7px 0 5px;
  font-size: 20px;
  line-height: 24px;
}
.document .small-bar {
  margin: 0 11px 0 5px;
  padding: 1px 0;
}
.document .tool {
  width: 118px;
  padding: 0 0 1px;
}
.doc-head {
  display: flex;
  align-items: flex-start;
  margin: 74px 10px 0 24px;
}
.doc-head label {
  padding-top: 6px;
  width: 75px;
}
.doc-head .sunken {
  height: 42px;
  padding-bottom: 8px;
}
.doc-head .no {
  width: 154px;
  text-align: right;
}
.blank {
  width: 30px;
  height: 42px;
  margin: 0 7px 0 6px;
}
.suffix {
  width: 116px;
  height: 34px;
}
.doc-head .date-label {
  width: 73px;
  padding-left: 16px;
}
.doc-head .date {
  width: 153px;
}
.doc-head .reason-label {
  width: 92px;
  margin-left: auto;
  padding-top: 10px;
}
.doc-head .reason {
  width: 397px;
}
.pick-reason {
  width: 40px;
  height: 43px;
}
.document .raised:not(.tool) > .ico {
  width: 20px;
  height: 20px;
}
.tabs {
  display: flex;
  margin: 7px 0 0 9px;
}
.tabs button {
  position: relative;
  width: 198px;
  height: 45px;
  margin-right: -1px;
  border: 1px solid #000;
  border-bottom: 0;
  border-radius: 8px 8px 0 0;
  background: #ebe8d7;
  box-shadow: inset 1px 1px #fff;
}
.tabs .on {
  z-index: 1;
  height: 46px;
  margin-bottom: -1px;
  font-weight: bold;
  font-size: 22px;
}
.sheet {
  margin: 0 5px 0 9px;
  padding: 13px 16px 12px 15px;
  border: 1px solid #000;
  box-shadow: inset 2px 2px #fff;
  background: #ebe8d7;
}
.form {
  display: flex;
  justify-content: space-between;
  height: 314px;
}
.col-a {
  display: flex;
  flex-direction: column;
  gap: 6px;
  width: 552px;
}
.ref-doc {
  width: 551px;
  height: 95px;
  margin-bottom: 7px;
}
.ref-in {
  display: flex;
  align-items: center;
  padding: 15px 8px 0 19px;
}
.ref-in label {
  width: 56px;
}
.ref-in .flat {
  width: 215px;
  height: 43px;
  border: 1px solid #000;
  padding: 0 3px;
}
.ref-in .flat + label {
  width: 84px;
  padding-left: 23px;
}
.ref-in .short {
  width: 166px;
}
.line {
  display: flex;
  align-items: center;
}
.line label {
  width: 118px;
  margin-right: 6px;
  text-align: right;
  white-space: nowrap;
}
.line .sunken {
  width: 375px;
  height: 42px;
}
.line .raised {
  width: 47px;
  height: 42px;
  margin-left: 6px;
}
.line .combo {
  width: 426px;
  height: 34px;
}
.line .combo.pay {
  width: 373px;
}
.col-b {
  width: 424px;
  margin-left: 11px;
}
.state {
  height: 131px;
}
.store {
  height: 126px;
  margin-top: 2px;
}
.store-in {
  display: flex;
  gap: 7px;
  padding: 8px 10px 0 7px;
}
.store-in .sunken {
  flex: 1;
  min-width: 0;
  height: 42px;
  padding-bottom: 10px;
}
.store-in .raised {
  width: 48px;
  height: 43px;
}
.raised.default {
  outline: 1px solid #000;
  outline-offset: -1px;
}
.col-c {
  width: 547px;
  margin-left: 20px;
  padding-top: 4px;
}
.party {
  display: flex;
  align-items: flex-start;
  gap: 7px;
}
.party .sunken {
  flex: 1;
  min-width: 0;
  height: 38px;
  padding-bottom: 6px;
}
.party .raised {
  width: 48px;
  height: 40px;
}
.party .raised.edge {
  width: 43px;
}
.party.greet {
  justify-content: space-between;
  margin: 5px 50px 0 0;
}
.party.greet .sunken {
  flex: none;
  width: 152px;
  height: 42px;
}
.party.addr {
  margin-top: 3px;
}
.party.addr .sunken {
  height: 164px;
  padding: 0 2px;
  resize: none;
  overflow: hidden;
}
.party.addr .raised, .party.contact .raised {
  height: 44px;
}
.party.contact {
  margin-top: 10px;
}
.party.contact label {
  width: 103px;
  padding: 10px 0 0 12px;
}
.party.contact .sunken {
  height: 46px;
}
.lines {
  display: flex;
  gap: 2px;
  margin-top: 14px;
}
.lines .viewport {
  flex: 1;
  height: 307px;
}
.sorters .raised {
  width: 43px;
  height: 47px;
}
.sorters .arrow-up {
  margin-top: 57px;
}
.sorters .arrow-down {
  margin-top: 8px;
}
.sorters .refresh {
  margin-top: 53px;
}
.foot {
  display: flex;
  justify-content: space-between;
  align-items: flex-end;
  margin-top: 14px;
}
.actions {
  display: flex;
  width: 950px;
  height: 260px;
}
.side-tabs {
  display: flex;
  flex-direction: column;
  width: 47px;
  margin-right: -1px;
  position: relative;
}
.side-tabs button {
  display: grid;
  place-items: center;
  flex: 1;
  width: 46px;
  border: 1px solid #000;
  border-radius: 6px 0 0 6px;
  background: #ebe8d7;
  font-weight: bold;
  font-size: 22px;
}
.side-tabs .on {
  width: 47px;
  border-right: 0;
}
.side-tabs span {
  writing-mode: vertical-rl;
  transform: rotate(180deg);
}
.action-grid {
  flex: 1;
  display: grid;
  grid-template-columns: 297px 294px 293px;
  grid-auto-rows: 74px;
  gap: 3px 1px;
  align-content: start;
  padding: 17px 7px 0;
  border: 2px solid;
  border-color: #000 #333 #333 #000;
  border-left-width: 1px;
  border-top-width: 1px;
  font-size: 13px;
  line-height: 16px;
}
.action-grid .raised {
  justify-content: flex-start;
  padding-left: 61px;
  gap: 10px;
}
.document .action-grid .raised > .ico {
  width: 28px;
  height: 28px;
}
.action-grid span {
  width: 132px;
  text-align: center;
  white-space: nowrap;
}
.sums {
  width: 510px;
}
.totals {
  display: flex;
  flex-direction: column;
  gap: 5px;
  height: 218px;
  padding: 6px 1px 0 0;
  border: 2px solid;
  border-color: #84826f #f6f4ea #f6f4ea #84826f;
}
.total {
  display: grid;
  grid-template-columns: 1fr 177px 84px 36px;
  column-gap: 3px;
  height: 36px;
}
.total label {
  text-align: right;
  line-height: 32px;
}
.total .sunken {
  min-width: 0;
  width: 100%;
  height: 36px;
  padding-right: 0;
  text-align: right;
}
.total .cur {
  text-align: left;
  padding-left: 0;
}
.total .strong {
  font-weight: bold;
}
.weights {
  display: flex;
  align-items: center;
  height: 51px;
  margin-top: 5px;
  padding: 0 36px 0 32px;
  border: 2px solid;
  border-color: #84826f #f6f4ea #f6f4ea #84826f;
}
.weights label {
  white-space: nowrap;
  margin-right: auto;
}
.weights .sunken {
  width: 123px;
  height: 42px;
  margin-right: 22px;
}
.weights .vol {
  width: 98px;
  margin-right: 0;
}

/* dialog */
.dialog {
  position: absolute;
  z-index: 3;
  top: 518px;
  left: 510px;
  width: 566px;
  border: solid #0c44d8;
  border-width: 0 3px 4px;
  background: #ebe8d7;
  font-size: 16px;
  line-height: 20px;
}
.dialog-bar {
  display: flex;
  justify-content: flex-end;
  height: 26px;
  padding: 5px 2px 0;
  background: linear-gradient(#0c54dc, #0468f8 30%, #0460ec);
}
.dialog-bar .win {
  width: 18px;
  height: 17px;
  border-radius: 2px;
}
.dialog-bar .win svg {
  width: 14px;
  height: 14px;
}
.dialog-head {
  display: flex;
  gap: 19px;
  height: 78px;
  padding: 6px 8px;
  background: #fff;
}
.dialog-head .ico {
  width: 54px;
  height: 54px;
  margin-top: 4px;
}
.dialog-head h2 {
  font: bold 18px/20px "Noto Sans", "Liberation Sans", sans-serif;
}
.dialog-body {
  padding: 10px 33px 12px;
}
.dialog-body .list {
  height: 204px;
}
.dialog-actions {
  display: flex;
  gap: 6px;
  margin-top: 7px;
  font-size: 13px;
}
.dialog-actions .raised {
  width: 142px;
  height: 43px;
  padding: 0 4px;
}
.document .dialog-actions .raised > .ico {
  width: 30px;
  height: 30px;
}
.dialog-actions span {
  flex: 1;
  text-align: center;
  padding-left: 12px;
}

/* taskbar */
.taskbar {
  display: flex;
  align-items: center;
  height: 38px;
  background: linear-gradient(#3470d8, #4890f4 8%, #2a66e2 24%, #2560dc 80%, #1c48b0);
  color: #fff;
  font: 14px/18px "Noto Sans", "Liberation Sans", sans-serif;
}
.start {
  display: flex;
  align-items: center;
  gap: 7px;
  width: 121px;
  height: 38px;
  padding-left: 12px;
  border: 0;
  border-radius: 0 10px 10px 0;
  background: linear-gradient(#3c8c3c, #68b868 10%, #3c983c 30%, #3c983c 80%, #287828);
  font: italic bold 22px/26px "Liberation Sans", sans-serif;
  text-shadow: 1px 2px 2px #184818;
}
.quick {
  display: flex;
  align-items: center;
  gap: 10px;
  width: 127px;
  padding-left: 16px;
}
.quick .ico {
  width: 19px;
  height: 20px;
}
.more {
  align-self: flex-start;
  padding-top: 1px;
  font-size: 20px;
  color: #b8d0fc;
}
.quick .more {
  margin-left: 3px;
}
.task {
  display: flex;
  align-items: center;
  gap: 5px;
  width: 198px;
  height: 30px;
  margin-right: 2px;
  padding-left: 12px;
  border: 0;
  border-radius: 3px;
  background: linear-gradient(#5c9cfc, #3c7cf0 25%, #3c7cf0 85%, #3470e0);
  white-space: nowrap;
}
.task.on {
  background: #1a48b0;
  box-shadow: inset 1px 1px 2px #0c2c78;
  font-size: 13px;
}
.task .ico {
  width: 20px;
  height: 20px;
}
.links {
  margin-left: auto;
  padding-right: 10px;
  font-size: 13px;
  color: #7ca4f0;
}
.tray {
  display: flex;
  align-items: center;
  align-self: stretch;
  gap: 3px;
  width: 115px;
  margin-left: 18px;
  background: linear-gradient(#1c94e8, #2cb4fc 8%, #1494ec 30%, #1494ec 80%, #1078c8);
}
.expand {
  width: 21px;
  height: 21px;
  margin: 0 0 0 -11px;
  border: 0;
  border-radius: 50%;
  background: #2c80e0;
  box-shadow: inset 1px 1px 2px #a0d0fc;
}
.expand svg {
  display: block;
}
.tray .ico {
  width: 20px;
  height: 20px;
}
.tray time {
  margin-left: 4px;
}
</style>
